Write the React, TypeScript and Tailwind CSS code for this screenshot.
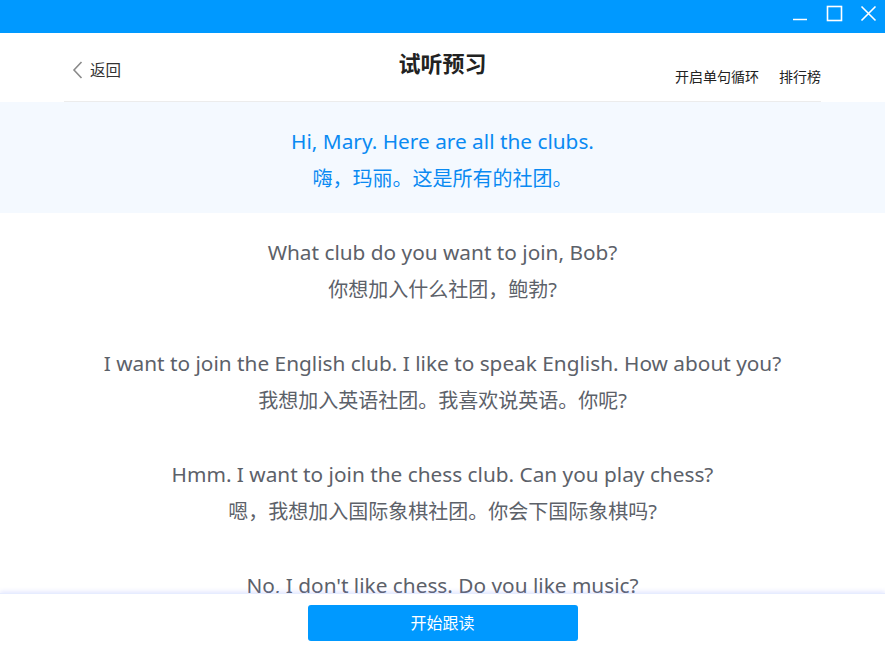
import React from "react";

const lines: { en: string; zh?: string }[] = [
  { en: "Hi, Mary. Here are all the clubs.", zh: "嗨，玛丽。这是所有的社团。" },
  { en: "What club do you want to join, Bob?", zh: "你想加入什么社团，鲍勃?" },
  {
    en: "I want to join the English club. I like to speak English. How about you?",
    zh: "我想加入英语社团。我喜欢说英语。你呢?",
  },
  {
    en: "Hmm. I want to join the chess club. Can you play chess?",
    zh: "嗯，我想加入国际象棋社团。你会下国际象棋吗?",
  },
  { en: "No, I don't like chess. Do you like music?" },
];

const font = { fontFamily: '"Noto Sans", "Noto Sans CJK SC", sans-serif' };

export default function App() {
  return (
    <div
      className="w-[885px] h-[647px] flex flex-col overflow-hidden bg-white"
      style={font}
    >
      {/* title bar */}
      <div className="h-[33px] shrink-0 bg-[#0099ff] flex justify-end items-start pr-[0px]">
        <div className="flex items-start">
          <div className="w-[34px] h-[33px] flex items-start justify-center pt-[4px]">
            <svg width="16" height="18" viewBox="0 0 16 18">
              <line x1="1" y1="15.5" x2="15" y2="15.5" stroke="white" strokeWidth="1.5" />
            </svg>
          </div>
          <div className="w-[34px] h-[33px] flex items-start justify-center pt-[5px]">
            <svg width="17" height="17" viewBox="0 0 17 17">
              <rect x="1.5" y="1.5" width="14" height="14" fill="none" stroke="white" strokeWidth="1.6" />
            </svg>
          </div>
          <div className="w-[34px] h-[33px] flex items-start justify-center pt-[5px]">
            <svg width="17" height="17" viewBox="0 0 17 17">
              <path d="M1.5 1.5 L15.5 15.5 M15.5 1.5 L1.5 15.5" stroke="white" strokeWidth="1.6" />
            </svg>
          </div>
        </div>
      </div>

      {/* header */}
      <div className="h-[69px] shrink-0 mx-[64px] border-b border-[#ececec] grid grid-cols-[1fr_auto_1fr]">
        <div className="flex items-start pt-[26px] pl-[8px] gap-[6px] text-[#333333]">
          <svg width="12" height="20" viewBox="0 0 12 20" className="mt-[1px]">
            <path d="M9.5 2 L2 10 L9.5 18" fill="none" stroke="#8a8a8a" strokeWidth="1.6" />
          </svg>
          <span className="text-[15.5px] leading-[22px]">返回</span>
        </div>
        <div className="pt-[16px] text-[22px] leading-[28px] font-bold text-[#222222]">试听预习</div>
        <div className="flex justify-end items-start pt-[34px] gap-[20px] text-[14px] leading-[20px] text-[#222222]">
          <span>开启单句循环</span>
          <span>排行榜</span>
        </div>
      </div>

      {/* content */}
      <div className="flex-1 overflow-hidden">
        {lines.map((l, i) => (
          <div
            key={i}
            className={`h-[111px] flex flex-col items-center pt-[25px] ${
              i === 0 ? "bg-[#f4f9ff] text-[#0a8af2]" : "text-[#5c6169]"
            }`}
          >
            <div className="text-[20.8px] leading-[28px] whitespace-nowrap">{l.en}</div>
            {l.zh && (
              <div className="text-[20px] leading-[28px] mt-[10px] whitespace-nowrap">{l.zh}</div>
            )}
          </div>
        ))}
      </div>

      {/* footer */}
      <div className="h-[54px] shrink-0 bg-white shadow-[0_-2px_4px_rgba(120,140,255,0.18)] border-t border-[#e6ecff] flex justify-center items-start pt-[11px]">
        <button className="w-[270px] h-[36px] rounded-[3px] bg-[#0099ff] text-white text-[16px] leading-[36px]">
          开始跟读
        </button>
      </div>
    </div>
  );
}
